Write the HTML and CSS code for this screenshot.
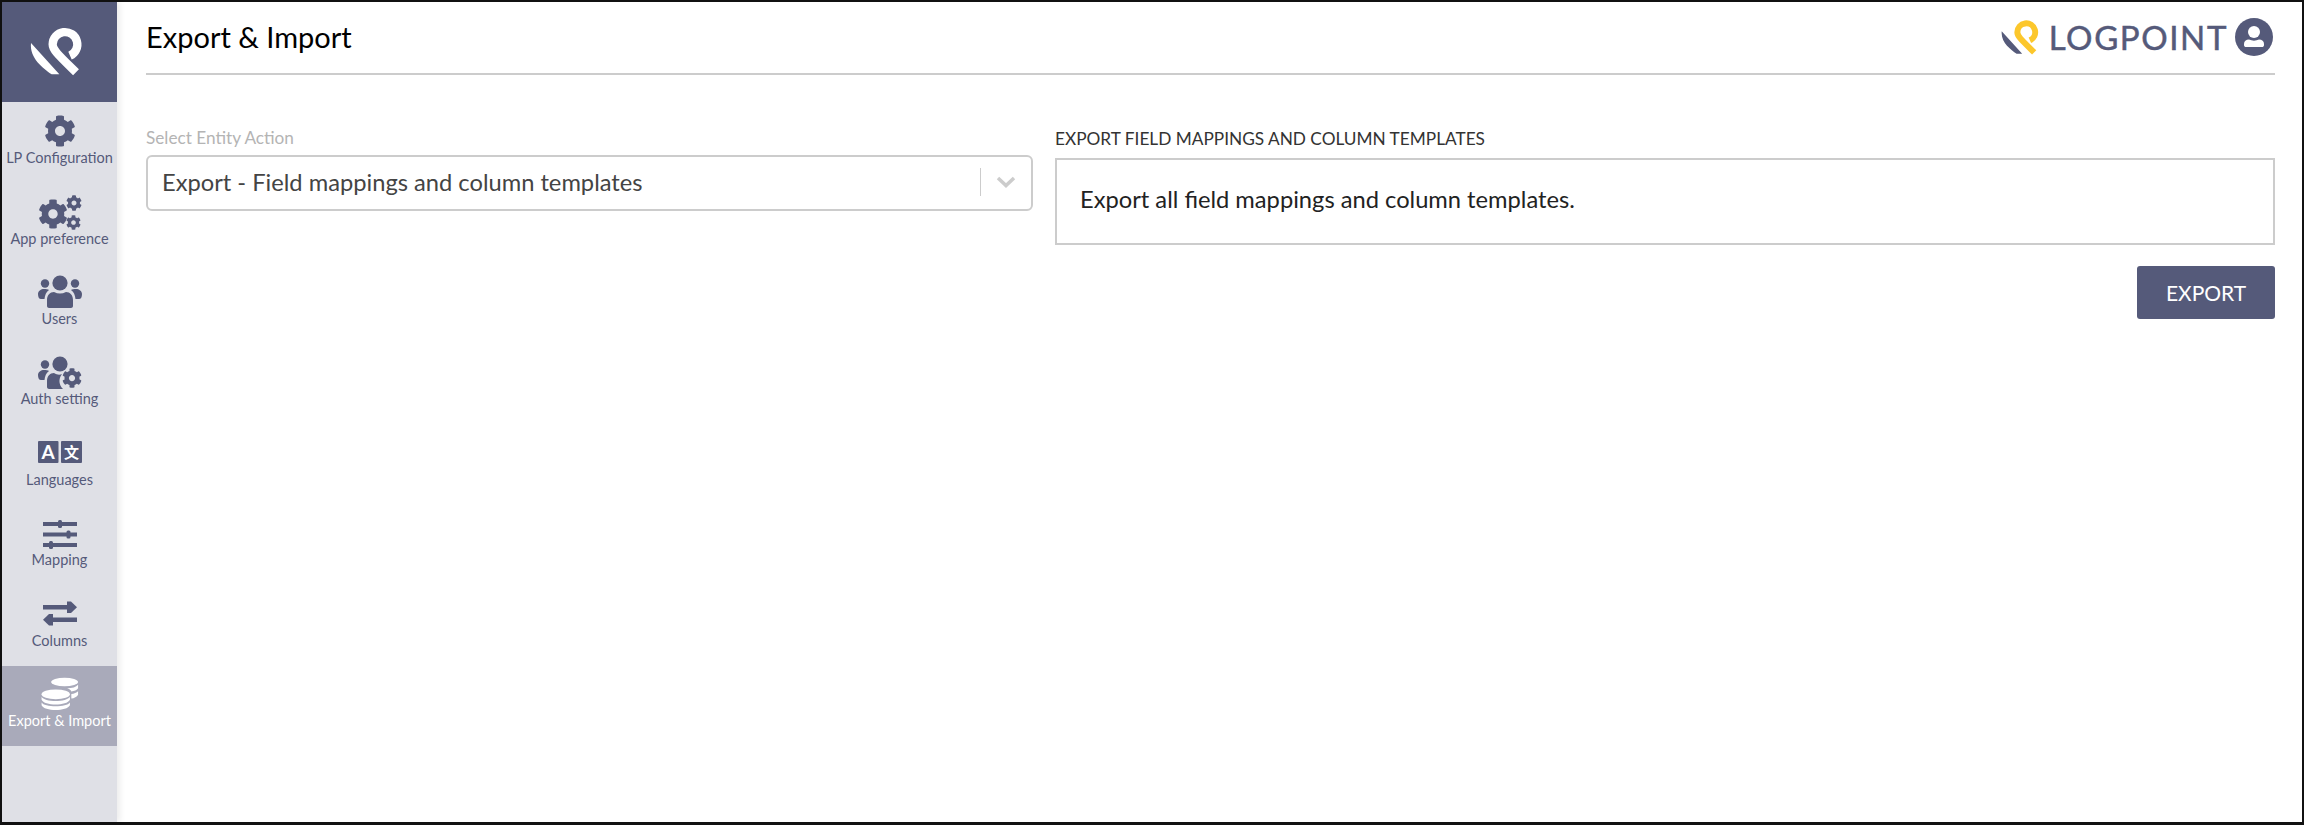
FILE: index.html
```html
<!DOCTYPE html>
<html lang="en">
<head>
    <meta charset="UTF-8">
    <meta name="viewport" content="width=device-width, initial-scale=1.0">
    <title>Export &amp; Import</title>
    <link rel="stylesheet" href="styles.css">
</head>
<body>
    <svg class="icon-defs" width="0" height="0">
        <defs>
            <symbol id="gear" viewBox="0 0 512 512">
                <path d="M487.4 315.7l-42.6-24.6c4.3-23.2 4.3-47 0-70.2l42.6-24.6c4.9-2.8 7.1-8.6 5.5-14-11.1-35.6-30-67.8-54.7-94.6-3.8-4.1-10-5.1-14.8-2.3L380.8 110c-17.9-15.4-38.5-27.3-60.8-35.1V25.8c0-5.6-3.9-10.5-9.4-11.7-36.7-8.2-74.3-7.8-109.2 0-5.5 1.2-9.4 6.1-9.4 11.7V75c-22.2 7.9-42.8 19.8-60.8 35.1L88.7 85.5c-4.9-2.8-11-1.9-14.8 2.3-24.7 26.7-43.6 58.9-54.7 94.6-1.7 5.4.6 11.2 5.5 14L67.3 221c-4.3 23.2-4.3 47 0 70.2l-42.6 24.6c-4.9 2.8-7.1 8.6-5.5 14 11.1 35.6 30 67.8 54.7 94.6 3.8 4.1 10 5.1 14.8 2.3l42.6-24.6c17.9 15.4 38.5 27.3 60.8 35.1v49.2c0 5.6 3.9 10.5 9.4 11.7 36.7 8.2 74.3 7.8 109.2 0 5.5-1.2 9.4-6.1 9.4-11.7v-49.2c22.2-7.9 42.8-19.8 60.8-35.1l42.6 24.6c4.9 2.8 11 1.9 14.8-2.3 24.7-26.7 43.6-58.9 54.7-94.6 1.5-5.5-.7-11.3-5.6-14.1zM256 336c-44.1 0-80-35.9-80-80s35.9-80 80-80 80 35.9 80 80-35.9 80-80 80z"/>
            </symbol>
        </defs>
    </svg>

    <div class="frame">
        <aside class="sidebar">
            <div class="brand">
                <svg width="80" height="70" viewBox="0 0 240 210">
                    <path d="M33 84 L118 178 H95 C70 160 28 130 33 84Z" fill="#fff"/>
                    <path d="M150 122 A37 37 0 1 0 98 88 C98 105 115 120 168 172" fill="none" stroke="#fff" stroke-width="25"/>
                </svg>
            </div>

            <a class="nav-item">
                <svg width="44" height="34" viewBox="0 0 44 34"><use href="#gear" x="6" y="2" width="32" height="32"/></svg>
                <span>LP Configuration</span>
            </a>
            <a class="nav-item">
                <svg width="44" height="36" viewBox="0 0 44 36">
                    <use href="#gear" x="0" y="5" width="30" height="30"/>
                    <use href="#gear" x="28" y="1" width="16" height="16"/>
                    <use href="#gear" x="28" y="21" width="15" height="15"/>
                </svg>
                <span class="tight">App preference</span>
            </a>
            <a class="nav-item">
                <svg width="44" height="34" viewBox="0 0 44 34">
                    <circle cx="22" cy="9" r="7.6"/>
                    <circle cx="7" cy="9.5" r="4.2"/>
                    <circle cx="37" cy="9.5" r="4.2"/>
                    <path d="M9 32 V26 C9 21 12 18 16 18 C20 20 24 20 28 18 C32 18 35 21 35 26 V32 C35 33 34 34 33 34 H11 C10 34 9 33 9 32Z"/>
                    <path d="M0 20 C0 17 3 15 6 15 C8 15 10 15 11 16 C8 18 7 21 6.5 25 L3 25 C1 25 0 23 0 20Z"/>
                    <path d="M44 20 C44 17 41 15 38 15 C36 15 34 15 33 16 C36 18 37 21 37.5 25 L41 25 C43 25 44 23 44 20Z"/>
                </svg>
                <span>Users</span>
            </a>
            <a class="nav-item">
                <svg width="44" height="34" viewBox="0 0 44 34">
                    <circle cx="22" cy="9" r="7.6"/>
                    <circle cx="7" cy="9.5" r="4.2"/>
                    <path d="M9 32 V26 C9 21 12 18 16 18 C19 20 22 20 24 19 C20 24 21 30 25 34 H11 C10 34 9 33 9 32Z"/>
                    <path d="M0 20 C0 17 3 15 6 15 C8 15 10 15 11 16 C8 18 7 21 6.5 25 L3 25 C1 25 0 23 0 20Z"/>
                    <use href="#gear" x="24" y="13" width="20" height="20"/>
                </svg>
                <span>Auth setting</span>
            </a>
            <a class="nav-item">
                <svg width="44" height="34" viewBox="0 0 44 34">
                    <rect x="0" y="6" width="20.5" height="22" rx="1"/>
                    <rect x="23" y="6" width="21" height="22" rx="1"/>
                    <text class="lang-a" x="10.2" y="24">A</text>
                    <text class="lang-b" x="33.5" y="23">文</text>
                </svg>
                <span>Languages</span>
            </a>
            <a class="nav-item">
                <svg width="44" height="34" viewBox="0 0 44 34">
                    <rect x="5" y="6" width="34" height="4"/>
                    <rect x="5" y="16.5" width="34" height="4"/>
                    <rect x="5" y="27" width="34" height="4"/>
                    <rect x="20" y="4" width="4" height="8" rx="1.5"/>
                    <rect x="28.5" y="14.5" width="4" height="8" rx="1.5"/>
                    <rect x="11" y="25" width="4" height="8" rx="1.5"/>
                </svg>
                <span>Mapping</span>
            </a>
            <a class="nav-item">
                <svg width="44" height="34" viewBox="0 0 44 34">
                    <rect x="5" y="9" width="28" height="4.5"/>
                    <path d="M29 5.5 L33 5.5 L39 11.2 L33 17 L29 17Z"/>
                    <rect x="11" y="21.5" width="28" height="4.5"/>
                    <path d="M15 18 L11 18 L5 23.7 L11 29.5 L15 29.5Z"/>
                </svg>
                <span>Columns</span>
            </a>
            <a class="nav-item active">
                <svg width="44" height="34" viewBox="28 36 124 96">
                    <ellipse cx="103" cy="50" rx="38" ry="12"/>
                    <path d="M141 58 V68 C138 74 130 76 122 77 C120 72 116 70 110 68 C125 68 135 65 141 58Z"/>
                    <path d="M141 76 V86 C138 92 130 96 122 97 V84 C130 83 137 80 141 76Z"/>
                    <ellipse cx="78" cy="85" rx="40" ry="14"/>
                    <path d="M38 92 C45 108 110 108 118 92 V100 C110 118 45 118 38 100Z"/>
                    <path d="M38 108 C45 122 110 122 118 108 V116 C110 134 45 134 38 116Z"/>
                </svg>
                <span>Export &amp; Import</span>
            </a>
        </aside>

        <main class="content">
            <header class="topbar">
                <h1>Export &amp; Import</h1>
                <div class="company">
                    <svg width="38" height="36" viewBox="30 35 158 146">
                        <path d="M33 84 L118 178 H95 C70 160 28 130 33 84Z" fill="#555a7a"/>
                        <path d="M150 122 A37 37 0 1 0 98 88 C98 105 115 120 168 172" fill="none" stroke="#fcc72c" stroke-width="25"/>
                    </svg>
                    <span class="company-name">LOGPOINT</span>
                    <svg class="avatar" width="38" height="38" viewBox="0 0 38 38">
                        <circle cx="19" cy="19" r="19" fill="#555a7a"/>
                        <circle cx="19" cy="14" r="6" fill="#fff"/>
                        <path d="M9 26 C9 23 11 21.5 14 21.5 C17 23 21 23 24 21.5 C27 21.5 29 23 29 26 V27 C29 28.5 28 29 27 29 H11 C10 29 9 28.5 9 27Z" fill="#fff"/>
                    </svg>
                </div>
            </header>

            <div class="columns">
                <section class="col-select">
                    <label class="select-label">Select Entity Action</label>
                    <div class="select">
                        <span class="select-value">Export - Field mappings and column templates</span>
                        <span class="select-sep"></span>
                        <svg width="20" height="12" viewBox="0 0 20 12" fill="none" stroke="#ccc" stroke-width="3.5">
                            <path d="M2 2 L10 9.5 L18 2"/>
                        </svg>
                    </div>
                </section>
                <section class="col-info">
                    <h2>EXPORT FIELD MAPPINGS AND COLUMN TEMPLATES</h2>
                    <div class="info-box">Export all field mappings and column templates.</div>
                    <div class="actions">
                        <button>EXPORT</button>
                    </div>
                </section>
            </div>
        </main>
    </div>
</body>
</html>
```

FILE: styles.css
```css
html, body {
    margin: 0;
    height: 100%;
    background: #fff;
}
body {
    font-family: Lato, 'Open Sans', sans-serif;
    color: #333;
}
.icon-defs {
    position: absolute;
}
.frame {
    display: flex;
    box-sizing: border-box;
    height: 825px;
    border: 2px solid #111;
    border-bottom-width: 3px;
}
.sidebar {
    width: 115px;
    flex-shrink: 0;
    background: #dfe0e6;
    box-shadow: 3px 0 6px rgba(0, 0, 0, 0.08);
}
.brand {
    height: 100px;
    box-sizing: border-box;
    padding-bottom: 4px;
    background: #555a7a;
    display: flex;
    align-items: center;
    justify-content: center;
}
.nav-item {
    height: 80.5px;
    box-sizing: border-box;
    padding-top: 11px;
    display: flex;
    flex-direction: column;
    align-items: center;
    color: #555a7a;
    font-size: 14.5px;
    line-height: 17px;
    white-space: nowrap;
}
.nav-item svg {
    fill: #555a7a;
    flex-shrink: 0;
}
.nav-item span {
    margin-top: 1.5px;
}
.nav-item span.tight {
    margin-top: 0;
}
.nav-item.active {
    background: #a9aaba;
    color: #fff;
}
.nav-item.active svg {
    fill: #fff;
}
.nav-item svg .lang-a {
    fill: #fff;
    font: 700 19px Lato, sans-serif;
    text-anchor: middle;
}
.nav-item svg .lang-b {
    fill: #fff;
    font: 700 15px 'Noto Sans CJK SC', sans-serif;
    text-anchor: middle;
}
.content {
    flex: 1;
    min-width: 0;
    padding: 0 27px 0 29px;
}
.topbar {
    height: 73px;
    box-sizing: border-box;
    display: flex;
    align-items: center;
    justify-content: space-between;
    border-bottom: 2px solid #ccc;
    padding-bottom: 2px;
}
.topbar h1 {
    margin: 0;
    font-size: 29px;
    font-weight: 400;
    color: #000;
}
.company {
    display: flex;
    align-items: center;
}
.company-name {
    margin-left: 10px;
    font-size: 33px;
    line-height: 38px;
    letter-spacing: 1.6px;
    color: #555a7a;
    -webkit-text-stroke: 0.5px #555a7a;
}
.avatar {
    margin-left: 7px;
    margin-right: 2px;
}
.columns {
    display: flex;
    gap: 22px;
    padding-top: 51px;
}
.col-select {
    width: 887px;
    flex-shrink: 0;
}
.col-info {
    flex: 1;
}
.select-label {
    display: block;
    font-size: 17.2px;
    line-height: 24px;
    color: #b4b4b4;
}
.select {
    display: flex;
    align-items: center;
    box-sizing: border-box;
    height: 56px;
    margin-top: 5px;
    padding: 0 15px 2px 14px;
    border: 2px solid #ccc;
    border-radius: 6px;
}
.select-value {
    flex: 1;
    font-size: 23.7px;
    color: #444;
}
.select-sep {
    width: 1px;
    height: 28px;
    background: #ccc;
    margin-right: 15px;
}
.col-info h2 {
    margin: 0;
    padding-top: 1px;
    font-size: 17.25px;
    font-weight: 400;
    line-height: 24px;
    color: #333;
}
.info-box {
    box-sizing: border-box;
    height: 87px;
    margin-top: 7px;
    padding: 24px 23px 0;
    border: 2px solid #ccc;
    font-size: 23.7px;
    line-height: 30px;
    color: #222;
}
.actions {
    display: flex;
    justify-content: flex-end;
    margin-top: 21px;
}
button {
    width: 138px;
    height: 53px;
    background: #555a7a;
    color: #fff;
    border: none;
    border-radius: 3px;
    font-family: inherit;
    font-size: 21px;
    cursor: pointer;
}
```
